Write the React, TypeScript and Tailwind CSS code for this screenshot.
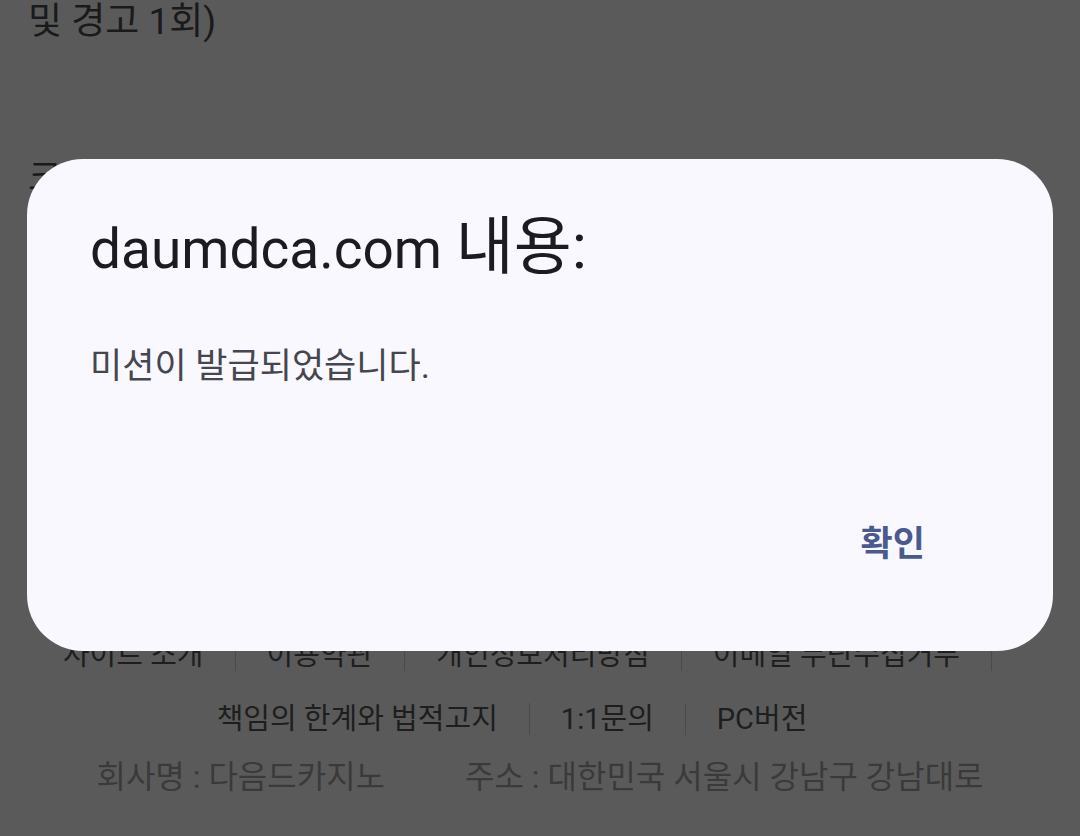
const font = { fontFamily: "Roboto, 'Noto Sans CJK KR', sans-serif" };

const linksTop = ["사이트 소개", "이용약관", "개인정보처리방침", "이메일 무단수집거부"];
const linksBottom = ["책임의 한계와 법적고지", "1:1문의", "PC버전"];

function FooterRow({ items, trailing }: { items: string[]; trailing?: boolean }) {
  return (
    <div className="flex justify-center w-[1024px] text-[29px] leading-[32px] text-[#1e1e1e]">
      {items.map((label, i) => {
        const sep = trailing || i < items.length - 1;
        return (
          <span
            key={label}
            className={`px-[31px] ${sep ? "border-r border-[#4a4a4a]" : ""}`}
          >
            {label}
          </span>
        );
      })}
    </div>
  );
}

export default function App() {
  return (
    <div className="relative w-[1080px] h-[836px] overflow-hidden bg-[#5a5a5a]" style={font}>
      {/* page behind the scrim */}
      <div className="flex flex-col">
        <p className="pl-[28px] text-[37px] leading-[44px] text-[#1a1a1a]">및 경고 1회)</p>
        <p className="pl-[28px] mt-[113px] text-[37px] leading-[44px] text-[#1a1a1a]">크</p>

        <div className="mt-[438px] flex flex-col gap-[32px]">
          <FooterRow items={linksTop} trailing />
          <FooterRow items={linksBottom} />
        </div>
        <div className="mt-[24px] flex justify-center gap-[80px] text-[32px] leading-[36px] text-[#3a3a3a]">
          <span>회사명 : 다음드카지노</span>
          <span>주소 : 대한민국 서울시 강남구 강남대로</span>
        </div>
      </div>

      {/* alert dialog */}
      <div className="absolute inset-0 pt-[159px] pl-[27px]">
        <div className="w-[1026px] h-[492px] rounded-[56px] bg-[#f8f8fe] flex flex-col pl-[63px] pr-[104px] pt-[62px] pb-[86px]">
          <h1 className="h-[56px] text-[55px] leading-[56px] text-[#1b1b21]">
            daumdca.com <span className="text-[63px] leading-[0]">내용:</span>
          </h1>
          <p className="mt-[70px] text-[35px] leading-[40px] text-[#45464f]">미션이 발급되었습니다.</p>
          <div className="flex-1" />
          <div className="flex justify-end">
            <button className="px-6 text-[35px] leading-[40px] font-semibold text-[#4a5a8e]">확인</button>
          </div>
        </div>
      </div>
    </div>
  );
}
